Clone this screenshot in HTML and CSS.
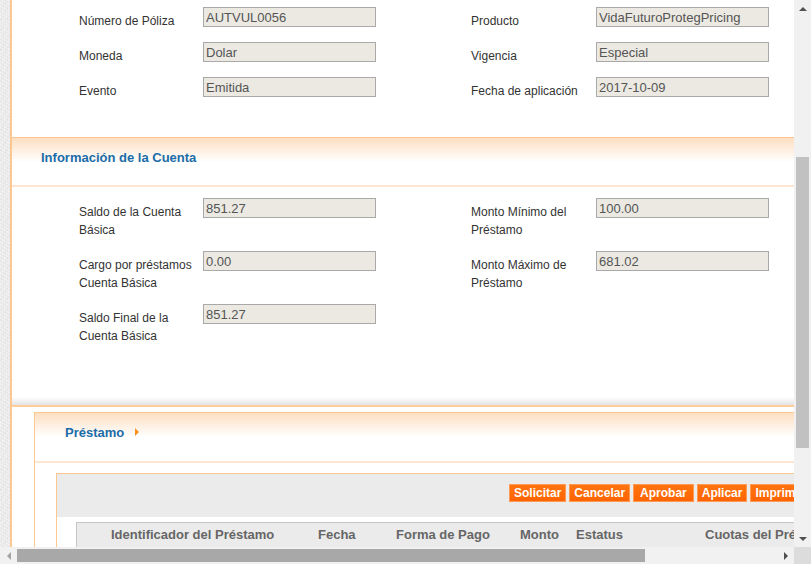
FILE: index.html
```html
<!DOCTYPE html>
<html lang="es">
<head>
<meta charset="utf-8">
<title>Préstamo</title>
<link rel="stylesheet" href="styles.css">
</head>
<body>
<div class="window">
  <div class="viewport">
    <div class="panel">
      <div class="fields fields-top">
        <div class="field"><label class="lbl">Número de Póliza</label><input class="inp" readonly value="AUTVUL0056"></div>
        <div class="field"><label class="lbl">Producto</label><input class="inp" readonly value="VidaFuturoProtegPricing"></div>
        <div class="field"><label class="lbl">Moneda</label><input class="inp" readonly value="Dolar"></div>
        <div class="field"><label class="lbl">Vigencia</label><input class="inp" readonly value="Especial"></div>
        <div class="field"><label class="lbl">Evento</label><input class="inp" readonly value="Emitida"></div>
        <div class="field"><label class="lbl">Fecha de aplicación</label><input class="inp" readonly value="2017-10-09"></div>
      </div>

      <div class="sec-head"><h2 class="sec-title">Información de la Cuenta</h2></div>

      <div class="fields fields-account">
        <div class="field"><label class="lbl">Saldo de la Cuenta Básica</label><input class="inp" readonly value="851.27"></div>
        <div class="field"><label class="lbl">Monto Mínimo del Préstamo</label><input class="inp" readonly value="100.00"></div>
        <div class="field"><label class="lbl">Cargo por préstamos Cuenta Básica</label><input class="inp" readonly value="0.00"></div>
        <div class="field"><label class="lbl">Monto Máximo de Préstamo</label><input class="inp" readonly value="681.02"></div>
        <div class="field"><label class="lbl">Saldo Final de la Cuenta Básica</label><input class="inp" readonly value="851.27"></div>
      </div>

      <div class="sub">
        <div class="subpanel">
          <div class="sub-head"><h3 class="sub-title">Préstamo</h3><span class="caret"></span></div>
          <div class="grid-box">
            <div class="toolbar">
              <button class="btn">Solicitar</button>
              <button class="btn">Cancelar</button>
              <button class="btn btn-wide">Aprobar</button>
              <button class="btn">Aplicar</button>
              <button class="btn">Imprimir</button>
            </div>
            <div class="thead">
              <div class="th th-first">Identificador del Préstamo</div>
              <div class="th">Fecha</div>
              <div class="th">Forma de Pago</div>
              <div class="th">Monto</div>
              <div class="th">Estatus</div>
              <div class="th">Cuotas del Préstamo</div>
            </div>
          </div>
        </div>
      </div>
    </div>
  </div>

  <div class="vscroll">
    <div class="arrow-box"><span class="arr arr-up"></span></div>
    <div class="vtrack"><div class="vthumb"></div></div>
    <div class="arrow-box"><span class="arr arr-down"></span></div>
  </div>
  <div class="hscroll">
    <div class="arrow-box"><span class="arr arr-left"></span></div>
    <div class="htrack"><div class="hthumb"></div></div>
    <div class="arrow-box"><span class="arr arr-right"></span></div>
  </div>
  <div class="corner"></div>
</div>
</body>
</html>
```

FILE: styles.css
```css
* { box-sizing: border-box; }

html, body {
  margin: 0;
  padding: 0;
  overflow: hidden;
}

body {
  font-family: "Liberation Sans", Arial, sans-serif;
  font-size: 12px;
  color: #333;
}

.window {
  display: grid;
  grid-template-columns: 794px 17px;
  grid-template-rows: 547px 17px;
  width: 811px;
  height: 564px;
}

.viewport {
  overflow: hidden;
  padding-left: 10px;
  background-color: #e7e7e7;
  background-image:
    repeating-linear-gradient(30deg, rgba(255,255,255,0.35) 0 1px, transparent 1px 3px),
    repeating-linear-gradient(-60deg, rgba(0,0,0,0.03) 0 1px, transparent 1px 5px),
    repeating-linear-gradient(90deg, rgba(255,255,255,0.25) 0 1px, transparent 1px 2px);
}

.panel {
  width: 1100px;
  min-height: 100%;
  background: #fff;
  border-left: 2px solid #fcc891;
}

/* field grids */
.fields {
  display: grid;
  grid-template-columns: 297px 298px;
  column-gap: 95px;
  row-gap: 12px;
  padding-left: 67px;
}

.fields-top {
  padding-top: 7px;
  padding-bottom: 37px;
}

.fields-account {
  padding-top: 11px;
  padding-bottom: 60px;
  background: linear-gradient(to bottom, #fff calc(100% - 8px), #e4e4e4);
  border-bottom: 2px solid #fdcc9a;
}

.field {
  display: grid;
  grid-template-columns: 1fr 173px;
  align-items: start;
}

.lbl {
  padding: 5px 6px 0 0;
  line-height: 18px;
  font-size: 12px;
  color: #333;
}

.inp {
  width: 173px;
  height: 20px;
  margin: 0;
  padding: 0 2px;
  border: 1px solid #a9a9a9;
  background: #ebe9e2;
  font-family: "Liberation Sans", Arial, sans-serif;
  font-size: 13px;
  color: #555;
  outline: none;
}

/* section header */
.sec-head {
  border-top: 1px solid #fbc48e;
  border-bottom: 2px solid #fee6d0;
  background: linear-gradient(to bottom, #fddfc2 0, #fff 24px);
  padding: 11px 0 18px 29px;
}

.sec-title, .sub-title {
  margin: 0;
  font-size: 13px;
  line-height: 18px;
  font-weight: bold;
  color: #1b6ca8;
}

/* prestamo sub panel */
.sub {
  padding: 5px 0 0 22px;
}

.subpanel {
  border-top: 1px solid #fcc891;
  border-left: 1px solid #fcc891;
}

.sub-head {
  display: flex;
  align-items: center;
  border-bottom: 2px solid #fee6d0;
  background: linear-gradient(to bottom, #fddfc2 0, #fff 24px);
  padding: 11px 0 19px 30px;
}

.caret {
  width: 0;
  height: 0;
  margin-left: 11px;
  margin-top: -2px;
  border-left: 4px solid #f7901e;
  border-top: 4px solid transparent;
  border-bottom: 4px solid transparent;
}

.grid-box {
  margin: 10px 0 0 21px;
  border-top: 1px solid #fcc891;
  border-left: 1px solid #fcc891;
  background: #fff;
}

.toolbar {
  display: flex;
  gap: 3px;
  background: #ebebeb;
  padding: 10px 0 15px 452px;
}

.btn {
  height: 18px;
  margin: 0;
  padding: 0 4px;
  border: 1px solid #ff9a55;
  background: linear-gradient(to bottom, #ff7410, #ff6400);
  color: #fff;
  font-family: "Liberation Sans", Arial, sans-serif;
  font-size: 12px;
  font-weight: bold;
  line-height: 16px;
  white-space: nowrap;
  cursor: pointer;
}

.btn-wide {
  padding: 0 6px;
}

.thead {
  display: grid;
  grid-template-columns: 241px 78px 124px 56px 129px auto;
  margin: 5px 0 0 19px;
  height: 26px;
  border: 1px solid #c6c6c6;
  background: #ebebeb;
}

.th {
  font-size: 13px;
  font-weight: bold;
  line-height: 23px;
  color: #666;
  white-space: nowrap;
}

.th-first {
  padding-left: 34px;
}

/* fake scrollbars */
.vscroll {
  display: flex;
  flex-direction: column;
  background: #f1f1f1;
}

.vtrack {
  flex: 1;
  padding: 140px 2px 0;
}

.vthumb {
  height: 291px;
  background: #c1c1c1;
}

.hscroll {
  display: flex;
  background: #f1f1f1;
}

.htrack {
  flex: 1;
  padding: 2px 0;
}

.hthumb {
  width: 628px;
  height: 13px;
  background: #a8a8a8;
}

.arrow-box {
  width: 17px;
  height: 17px;
  display: flex;
  align-items: center;
  justify-content: center;
  flex: none;
}

.arr {
  width: 0;
  height: 0;
}

.arr-up {
  border-left: 4px solid transparent;
  border-right: 4px solid transparent;
  border-bottom: 4px solid #505050;
}

.arr-down {
  border-left: 4px solid transparent;
  border-right: 4px solid transparent;
  border-top: 4px solid #505050;
}

.arr-left {
  border-top: 4px solid transparent;
  border-bottom: 4px solid transparent;
  border-right: 4px solid #a3a3a3;
}

.arr-right {
  border-top: 4px solid transparent;
  border-bottom: 4px solid transparent;
  border-left: 4px solid #505050;
}

.corner {
  background: #dcdcdc;
}
```
